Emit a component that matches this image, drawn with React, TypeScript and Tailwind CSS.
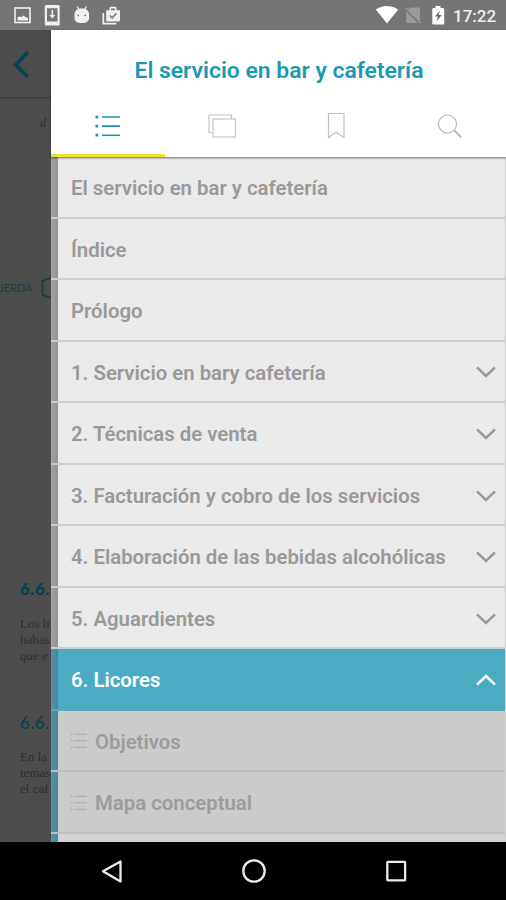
import clsx from "clsx";

type Chapter = {
  title: string;
  expandable?: boolean;
  open?: boolean;
};

const CHAPTERS: Chapter[] = [
  { title: "El servicio en bar y cafetería" },
  { title: "Índice" },
  { title: "Prólogo" },
  { title: "1. Servicio en bary cafetería", expandable: true },
  { title: "2. Técnicas de venta", expandable: true },
  { title: "3. Facturación y cobro de los servicios", expandable: true },
  { title: "4. Elaboración de las bebidas alcohólicas", expandable: true },
  { title: "5. Aguardientes", expandable: true },
  { title: "6. Licores", expandable: true, open: true },
];

const SECTIONS = ["Objetivos", "Mapa conceptual"];

function StatusBar() {
  return (
    <div className="flex h-[30px] shrink-0 items-center bg-[#757575] text-[#f0f0f0]">
      <svg className="h-[30px] w-[130px]" viewBox="0 0 130 30">
        <rect x="15" y="8" width="15" height="14.5" fill="none" stroke="currentColor" strokeWidth="1.6" />
        <path d="M17.500 20.500v-3l2-1 2 .5 2-1.500 2 1.500 2.500 1v2.500z" fill="currentColor" />
        <path fillRule="evenodd" d="M46 5h12.500q1.200 0 1.200 1.200v18q0 1.200-1.200 1.200H46q-1.200 0-1.200-1.200v-18Q44.800 5 46 5zM47 8.200v13.300h10.500V8.200z" fill="currentColor" />
        <path d="M51.500 10h1.600v5h2.100L52.300 18.500 49.300 15h2.200z" fill="currentColor" />
        <path d="M77.300 6.800l2 3M86.300 6.800l-2 3" stroke="currentColor" strokeWidth="1.200" strokeLinecap="round" />
        <path d="M74.500 14.500c0-4 3.200-6 7.300-6s7.300 2 7.300 6v3.700c0 3.200-3 4.800-7.300 4.800s-7.300-1.600-7.300-4.800z" fill="currentColor" />
        <circle cx="78.300" cy="15.300" r="0.900" fill="#757575" />
        <circle cx="85.300" cy="15.300" r="0.900" fill="#757575" />
        <path d="M103.300 13v10.700h13" fill="none" stroke="currentColor" strokeWidth="1.800" />
        <path fillRule="evenodd" d="M106.200 10.300h3.300V8.200q0-1.400 1.400-1.400h4.200q1.400 0 1.400 1.400v2.100h3.500V20q0 1.500-1.500 1.500h-10.800q-1.500 0-1.500-1.500zM111 8.500v1.800h4V8.500z" fill="currentColor" />
        <path d="M109.800 15.500l2.400 2.300 4.200-4.500" fill="none" stroke="#757575" strokeWidth="1.600" />
      </svg>
      <svg className="ml-auto h-[30px] w-[76px]" viewBox="372 0 76 30">
        <path d="M375.800 9.500c6.500-4.800 15.900-4.800 22.400 0L387 23.500z" fill="#fff" />
        <path d="M410 7.500h10v14.300L408 9.500z M406.300 11.500l11.700 11.500h-11.700z" fill="#999" />
        <path d="M405.500 7.700l15.500 15.500" stroke="#9c9c9c" strokeWidth="1.200" />
        <path d="M435.500 6h5v2H443q1.200 0 1.200 1.200v14q0 1.200-1.200 1.200h-9.500q-1.200 0-1.200-1.200v-14q0-1.200 1.200-1.200h2z" fill="#fff" />
        <path d="M440 10.500l-5 6h3l-1.500 5 5.200-6.500h-3.200z" fill="#666" />
      </svg>
      <span className="w-[58px] pt-[2px] pl-[5px] text-[17px] leading-[30px] font-medium whitespace-nowrap">17:22</span>
    </div>
  );
}

/* Dimmed page of the book that stays visible beside the drawer */
function BookPage() {
  return (
    <div className="w-[51px] shrink-0 overflow-hidden bg-[#4d4d4d] whitespace-nowrap text-[#2e2e2e]">
      <div className="flex h-[69px] items-start border-b-2 border-[#404040] pt-[20px] pl-[12px]">
        <svg className="h-[30px] w-[20px]" viewBox="0 0 20 30" fill="none" stroke="#07435c" strokeWidth="3.800">
          <path d="M15.800 2.200L3.800 14.800l12 12" />
        </svg>
      </div>
      <p className="mt-[14px] h-[20px] pl-[40px] font-['Liberation_Serif'] text-[12px] leading-[20px] italic">d</p>
      <div className="mt-[144px] flex h-[22px] items-center text-[#1d3c43]">
        <span className="-ml-[4px] w-[45px] font-['Lato'] text-[11px] tracking-[-0.1px]">UERDA</span>
        <svg className="h-[22px] w-[10px] shrink-0" viewBox="0 0 10 22" fill="none" stroke="#173d47" strokeWidth="1.800">
          <path d="M10 1L5 2.500 1.500 4v13.500L5 19.500l5 1" />
        </svg>
      </div>
      <h3 className="mt-[279px] pl-[20px] font-['Lato'] text-[17px] leading-[22px] font-black tracking-[0.5px] text-[#0b3f50]">6.6.</h3>
      <p className="mt-[16px] pl-[20px] font-['Liberation_Serif'] text-[13px] leading-[16px]">
        Los li
        <br />
        habas
        <br />
        <em>que e</em>
      </p>
      <h3 className="mt-[48px] pl-[20px] font-['Lato'] text-[17px] leading-[22px] font-medium tracking-[0.5px] text-[#0b3f50]">6.6.</h3>
      <p className="mt-[15px] pl-[20px] font-['Liberation_Serif'] text-[13px] leading-[16px]">
        En la
        <br />
        temas
        <br />
        el caf
      </p>
    </div>
  );
}

function Tabs() {
  return (
    <div className="grid h-[63px] grid-cols-4">
      <button type="button" aria-label="Índice" className="flex justify-center border-b-[3px] border-[#efe236] pt-[21px]">
        <svg className="h-[24px] w-[26px]" viewBox="0 0 26 24" fill="#1b93ae">
          <path d="M.5 .8h2.700v2.700H.5zM.5 9.700h2.700v2.700H.5zM.5 18.800h2.700v2.700H.5zM7 1.300h18v1.500H7zM7 10.200h18v1.700H7zM7 19.400h18v1.500H7z" />
        </svg>
      </button>
      <button type="button" aria-label="Páginas" className="flex justify-center pt-[20px]">
        <svg className="h-[26px] w-[30px]" viewBox="0 0 30 26" fill="none" stroke="#c6c6c6" strokeWidth="1.200">
          <path d="M5.500 18.500h-3.500V1h22.500v4" />
          <rect x="6" y="5" width="22.500" height="18" />
        </svg>
      </button>
      <button type="button" aria-label="Marcadores" className="flex justify-center pt-[18px] pl-[1px]">
        <svg className="h-[28px] w-[18px]" viewBox="0 0 18 28" fill="none" stroke="#c0c0c0" strokeWidth="1.200">
          <path d="M1.500 1.500h15.500v24l-8-5.200-7.500 5.200z" />
        </svg>
      </button>
      <button type="button" aria-label="Buscar" className="flex justify-center pt-[20px] pl-[1px]">
        <svg className="h-[26px] w-[26px]" viewBox="0 0 26 26" fill="none" stroke="#b8b8b8">
          <circle cx="10.500" cy="10" r="9" strokeWidth="1.200" />
          <path d="M17 16.300l7.200 7" strokeWidth="2" />
        </svg>
      </button>
    </div>
  );
}

function ChapterRow({ title, expandable, open }: Chapter) {
  return (
    <li
      className={clsx(
        "flex h-[61.55px] items-center border-b-2 pr-[9px]",
        open ? "border-[#64a6b5] bg-[#4aabc2] text-white" : "border-[#cdcdcd] bg-[#eaeaea] text-[#999]"
      )}
    >
      <div
        className={clsx(
          "w-[7px] shrink-0 self-stretch bg-linear-to-r",
          open ? "from-[#5794a5] to-[#46879a]" : "from-[#a3a3a3] to-[#939393]"
        )}
      />
      <span className="pt-[3px] pl-[13px]">{title}</span>
      {expandable && (
        <svg
          className={clsx("mt-[2px] ml-auto h-[14px] w-[20px]", open && "rotate-180")}
          viewBox="0 0 20 14"
          fill="none"
          stroke="currentColor"
          strokeWidth="2.500"
        >
          <path d="M1 2.300l9 8.700 9-8.700" />
        </svg>
      )}
    </li>
  );
}

function SectionRow({ title }: { title: string }) {
  return (
    <li className="flex h-[61.55px] items-center border-b-2 border-[#bebebe] bg-[#cbcbcb] text-[#9b9b9b]">
      <div className="w-[7px] shrink-0 self-stretch bg-linear-to-r from-[#5794a5] to-[#46879a]" />
      <svg className="mt-[1px] mr-[8px] ml-[12px] h-[16px] w-[17px]" viewBox="0 0 17 16" fill="#a8a8a8">
        <path d="M1 .5h1.500V2H1zM1 7h1.500v1.500H1zM1 13.500h1.500V15H1zM4.500 .8H17v1H4.500zM4.500 7.300H17v1H4.500zM4.500 13.800H17v1H4.500z" />
      </svg>
      <span className="pt-[3px]">{title}</span>
    </li>
  );
}

function NavBar() {
  return (
    <div className="flex h-[58px] shrink-0 items-center justify-center bg-black">
      <svg className="h-[58px] w-[320px]" viewBox="93 842 320 58" fill="none" stroke="#ececec" strokeWidth="2.300">
        <path d="M120.500 861.500v20L103 871.300z" strokeLinejoin="round" />
        <circle cx="254" cy="871" r="10.700" />
        <rect x="387.300" y="861.800" width="17.800" height="18.500" rx="0.500" />
      </svg>
    </div>
  );
}

export default function App() {
  return (
    <div className="flex h-[900px] w-[506px] flex-col overflow-hidden bg-black font-['Roboto',sans-serif]">
      <StatusBar />
      <div className="flex min-h-0 flex-1">
        <BookPage />
        <aside className="flex min-w-0 flex-1 flex-col">
          <header className="z-10 h-[127px] shrink-0 bg-white shadow-[0_1px_2px_rgba(0,0,0,0.55)]">
            <h1 className="h-[64px] pt-[26px] pl-[1px] text-center text-[22.9px] leading-[30px] font-semibold text-[#1b99b3]">
              El servicio en bar y cafetería
            </h1>
            <Tabs />
          </header>
          <ul className="flex min-h-0 flex-1 flex-col overflow-hidden border-r border-[#cfcfcf] text-[20.35px] font-semibold whitespace-nowrap *:shrink-0">
            {CHAPTERS.map((c) => (
              <ChapterRow key={c.title} {...c} />
            ))}
            {SECTIONS.map((s) => (
              <SectionRow key={s} title={s} />
            ))}
            <li className="flex h-[61.55px] bg-[#d3d3d3]">
              <div className="w-[7px] bg-linear-to-r from-[#5794a5] to-[#46879a]" />
            </li>
          </ul>
        </aside>
      </div>
      <NavBar />
    </div>
  );
}
